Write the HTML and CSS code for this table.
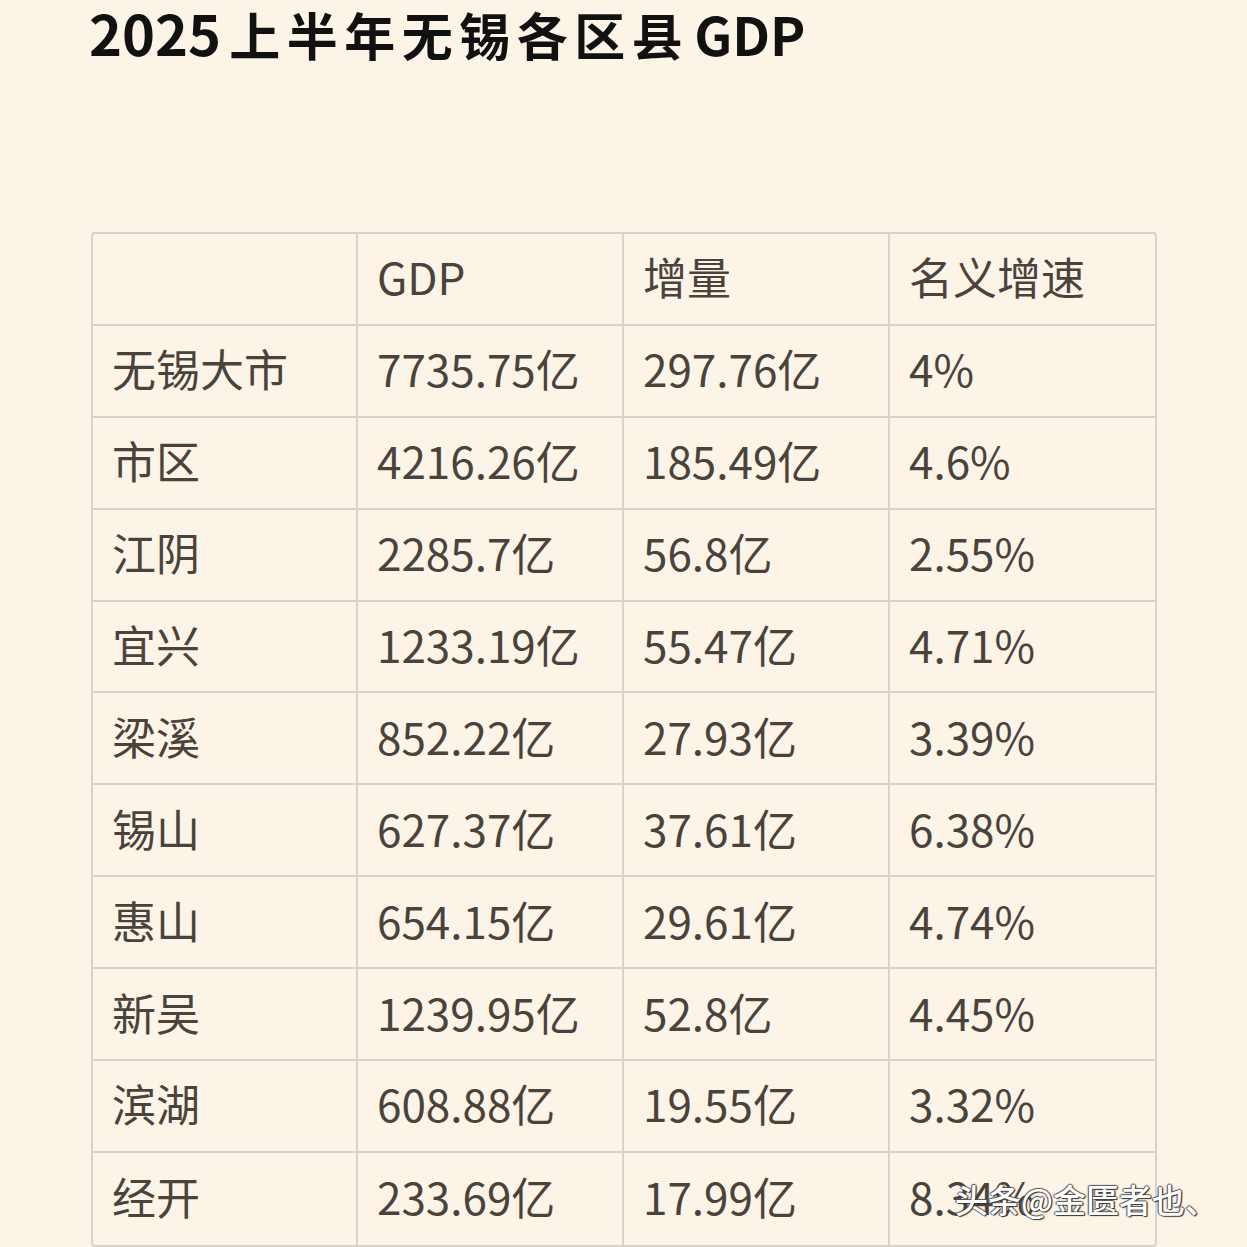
FILE: index.html
```html
<!DOCTYPE html>
<html lang="zh-CN">
<head>
<meta charset="utf-8">
<title>2025上半年无锡各区县GDP</title>
<link rel="stylesheet" href="styles.css">
</head>
<body>
<div class="page">
  <h1 class="title"><span class="num">2025</span><span class="cjk">上半年无锡各区县</span><span class="abbr">GDP</span></h1>
  <div class="table">
    <div class="cell"></div><div class="cell">GDP</div><div class="cell">增量</div><div class="cell last">名义增速</div>
    <div class="cell">无锡大市</div><div class="cell">7735.75亿</div><div class="cell">297.76亿</div><div class="cell last">4%</div>
    <div class="cell">市区</div><div class="cell">4216.26亿</div><div class="cell">185.49亿</div><div class="cell last">4.6%</div>
    <div class="cell">江阴</div><div class="cell">2285.7亿</div><div class="cell">56.8亿</div><div class="cell last">2.55%</div>
    <div class="cell">宜兴</div><div class="cell">1233.19亿</div><div class="cell">55.47亿</div><div class="cell last">4.71%</div>
    <div class="cell">梁溪</div><div class="cell">852.22亿</div><div class="cell">27.93亿</div><div class="cell last">3.39%</div>
    <div class="cell">锡山</div><div class="cell">627.37亿</div><div class="cell">37.61亿</div><div class="cell last">6.38%</div>
    <div class="cell">惠山</div><div class="cell">654.15亿</div><div class="cell">29.61亿</div><div class="cell last">4.74%</div>
    <div class="cell">新吴</div><div class="cell">1239.95亿</div><div class="cell">52.8亿</div><div class="cell last">4.45%</div>
    <div class="cell">滨湖</div><div class="cell">608.88亿</div><div class="cell">19.55亿</div><div class="cell last">3.32%</div>
    <div class="cell bottom">经开</div><div class="cell bottom">233.69亿</div><div class="cell bottom">17.99亿</div><div class="cell bottom last">8.34%</div>
  </div>
  <div class="watermark">头条@金匮者也、</div>
</div>
</body>
</html>
```

FILE: styles.css
```css
html, body {
  margin: 0;
  padding: 0;
  background: #fdf4e8;
}
.page {
  position: relative;
  width: 1247px;
  height: 1247px;
  overflow: hidden;
  font-family: "Noto Sans CJK SC", "Noto Sans", sans-serif;
}
.title {
  margin: -9px 0 0 0;
  padding-left: 89px;
  font-size: 51px;
  line-height: 82px;
  font-weight: 700;
  color: #111;
  white-space: nowrap;
}
.num {
  font-size: 56px;
  margin-right: 8px;
}
.cjk {
  letter-spacing: 6.5px;
}
.abbr {
  font-size: 53px;
  margin-left: 5px;
}
.table {
  margin: 157px 0 0 91px;
  width: 1066px;
  box-sizing: border-box;
  border: 2px solid #d7d2cb;
  border-radius: 4px;
  display: grid;
  grid-template-columns: 265px 266px 266px 265px;
}
.cell {
  box-sizing: border-box;
  height: 91.9px;
  border-right: 2px solid #d7d2cb;
  border-bottom: 2px solid #d7d2cb;
  display: flex;
  align-items: center;
  padding-left: 19px;
  padding-bottom: 5px;
  font-size: 44px;
  line-height: 64px;
  color: #4a433c;
  white-space: nowrap;
}
.cell.last {
  border-right: none;
}
.cell.bottom {
  border-bottom: none;
}
.watermark {
  position: absolute;
  left: 955px;
  top: 1175px;
  font-size: 33px;
  line-height: 48px;
  font-weight: 500;
  color: #ffffff;
  text-shadow: 1px 1px 1px #333, -1px 0 1px #555, 0 -1px 1px #555, 1px 0 1px #444;
}
```
